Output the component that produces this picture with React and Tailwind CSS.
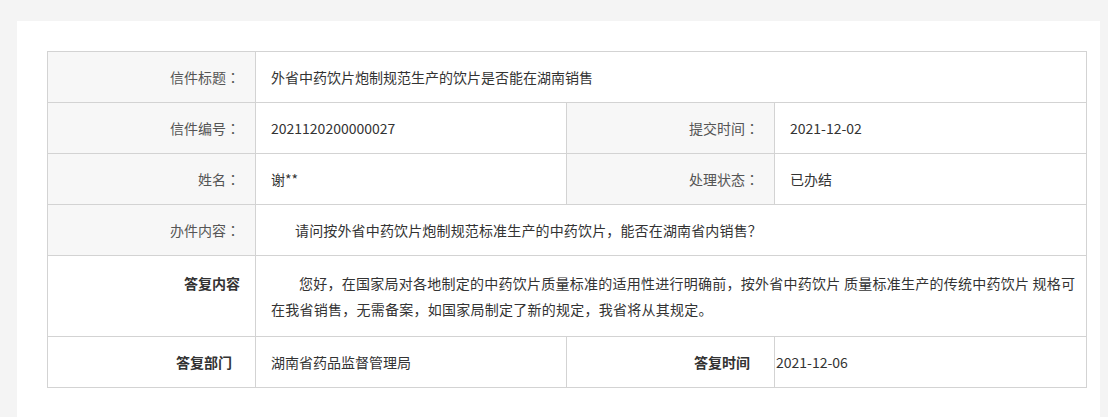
import React from "react";

const F = { fontFamily: '"Noto Sans CJK SC", "Noto Sans", sans-serif' };

function Colon() {
  return <span style={{ fontFamily: '"Noto Sans CJK JP", "Noto Sans CJK SC", sans-serif' }}>：</span>;
}

function Label({ children, bg = true, className = "" }) {
  return (
    <div
      className={`flex items-center justify-end border-r border-[#d3d3d3] pr-[15px] text-[14px] text-[#555] ${bg ? "bg-[#f7f7f7]" : "bg-white"} ${className}`}
    >
      {children}
      <Colon />
    </div>
  );
}

function Value({ children, className = "" }) {
  return (
    <div className={`flex items-center border-r border-[#d3d3d3] pl-[15px] text-[14px] text-[#333] ${className}`}>
      {children}
    </div>
  );
}

export default function App() {
  return (
    <div className="w-[1108px] h-[417px] overflow-hidden bg-[#f4f4f4] pt-[21px] pl-[17px] pr-[8px]" style={F}>
      <div className="bg-white h-[420px] pt-[30px] pl-[30px]">
        <div className="w-[1040px] border-l border-t border-[#d3d3d3]">
          <div className="flex h-[51px] border-b border-[#d3d3d3]">
            <Label className="w-[208px]">信件标题</Label>
            <Value className="w-[831px]">外省中药饮片炮制规范生产的饮片是否能在湖南销售</Value>
          </div>
          <div className="flex h-[51px] border-b border-[#d3d3d3]">
            <Label className="w-[208px]">信件编号</Label>
            <Value className="w-[311px]">2021120200000027</Value>
            <Label className="w-[208px]">提交时间</Label>
            <Value className="w-[312px]">2021-12-02</Value>
          </div>
          <div className="flex h-[51px] border-b border-[#d3d3d3]">
            <Label className="w-[208px]">姓名</Label>
            <Value className="w-[311px]">谢**</Value>
            <Label className="w-[208px]">处理状态</Label>
            <Value className="w-[312px]">已办结</Value>
          </div>
          <div className="flex h-[51px] border-b border-[#d3d3d3]">
            <Label className="w-[208px]">办件内容</Label>
            <Value className="w-[831px]">
              <span className="pl-[24px] tracking-[0.15px]">请问按外省中药饮片炮制规范标准生产的中药饮片，能否在湖南省内销售？</span>
            </Value>
          </div>
          <div className="flex h-[81px] border-b border-[#d3d3d3]">
            <div className="w-[208px] border-r border-[#d3d3d3] pt-[14px] pr-[15px] text-right text-[14px] leading-[26px] font-bold text-[#333]">
              答复内容
            </div>
            <div className="w-[831px] border-r border-[#d3d3d3] pt-[14px] pl-[15px] pr-[4px] text-[14px] leading-[26px] text-[#333]">
              <p className="indent-[28px] tracking-[0.25px] whitespace-nowrap">
                您好，在国家局对各地制定的中药饮片质量标准的适用性进行明确前，按外省中药饮片 质量标准生产的传统中药饮片 规格可
                <br />
                在我省销售，无需备案，如国家局制定了新的规定，我省将从其规定。
              </p>
            </div>
          </div>
          <div className="flex h-[51px] border-b border-[#d3d3d3]">
            <div className="w-[208px] flex items-center justify-end border-r border-[#d3d3d3] pr-[23px] text-[14px] font-bold text-[#333]">
              答复部门
            </div>
            <Value className="w-[311px]">湖南省药品监督管理局</Value>
            <div className="w-[208px] flex items-center justify-end border-r border-[#d3d3d3] pr-[24px] text-[14px] font-bold text-[#333]">
              答复时间
            </div>
            <div className="w-[312px] flex items-center border-r border-[#d3d3d3] pl-[1px] text-[14px] text-[#333]">
              2021-12-06
            </div>
          </div>
        </div>
      </div>
    </div>
  );
}
